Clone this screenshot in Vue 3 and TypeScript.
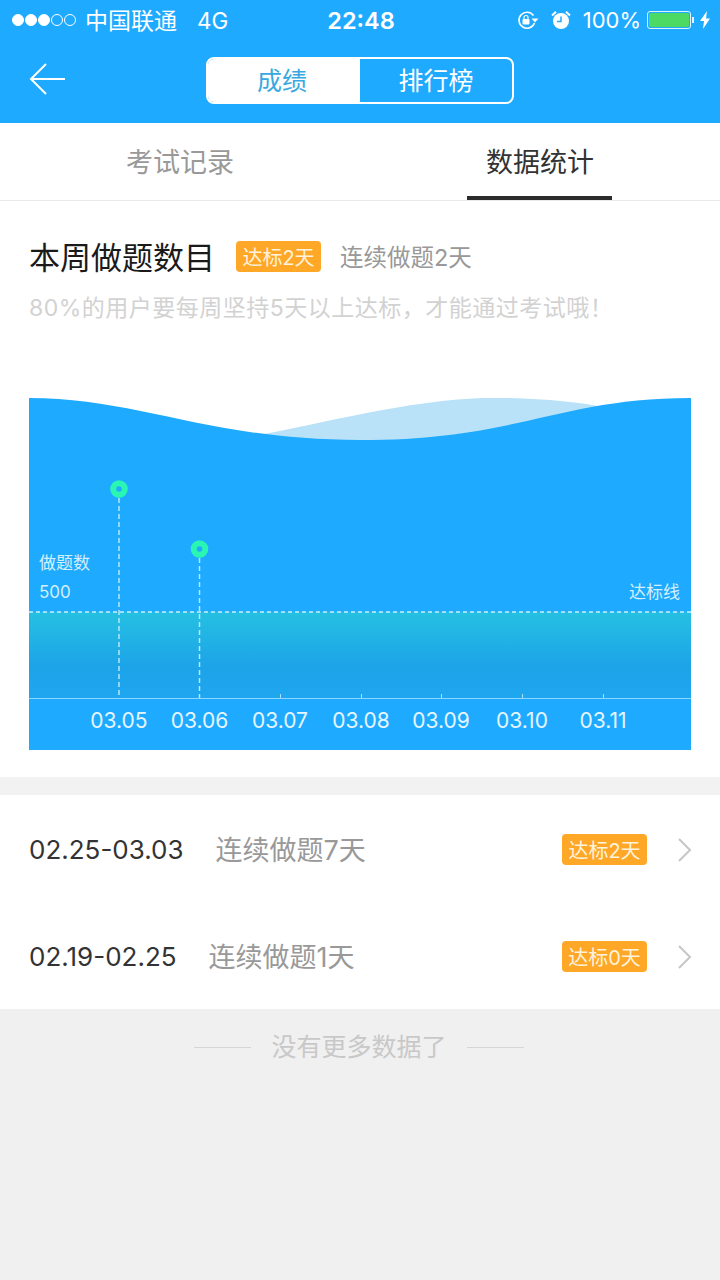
<script setup lang="ts">
const dates = ['03.05', '03.06', '03.07', '03.08', '03.09', '03.10', '03.11']
const xs = [90, 170.5, 251, 332, 412, 493, 574]
const points = [
  { x: 90, y: 91 },
  { x: 170.5, y: 151 }
]
const history = [
  { range: '02.25-03.03', streak: '连续做题7天', days: '达标2天' },
  { range: '02.19-02.25', streak: '连续做题1天', days: '达标0天' }
]
</script>

<template>
  <div class="page">
    <header class="head">
      <div class="status">
        <div class="status-left">
          <span class="dots">
            <i class="dot on"></i><i class="dot on"></i><i class="dot on"></i><i class="dot"></i><i class="dot"></i>
          </span>
          <span class="carrier">中国联通</span>
          <span class="net">4G</span>
        </div>
        <div class="clock">22:48</div>
        <div class="status-right">
          <svg class="ico-lock" width="24" height="20" viewBox="0 0 24 20">
            <path d="M17.5 5.500A8 8 0 1 0 18.500 13" fill="none" stroke="#fff" stroke-width="1.600" />
            <path d="M15.500 8.500h7l-3.500 4z" fill="#fff" />
            <rect x="6.500" y="9" width="7" height="5.500" rx="1" fill="#fff" />
            <path d="M8 9V7.500a2 2 0 0 1 4 0V9" fill="none" stroke="#fff" stroke-width="1.200" />
          </svg>
          <svg class="ico-alarm" width="20" height="20" viewBox="0 0 20 20">
            <circle cx="10" cy="11" r="8" fill="#fff" />
            <path d="M10 6.500V11.500H6" fill="none" stroke="#1eaaff" stroke-width="1.500" />
            <path d="M1 5.500 5 1.800M19 5.500 15 1.800" stroke="#fff" stroke-width="2" />
          </svg>
          <span class="pct">100%</span>
          <span class="battery"><span class="battery-fill"></span></span>
          <span class="battery-cap"></span>
          <svg class="ico-bolt" width="12" height="18" viewBox="0 0 12 18">
            <path d="M8 0 1 10h4l-1 8 7-10.500H7z" fill="#fff" />
          </svg>
        </div>
      </div>
      <div class="nav">
        <svg class="back" width="38" height="32" viewBox="0 0 38 32">
          <path d="M36 16H2M17 1 2 16l15 15" fill="none" stroke="#fff" stroke-width="2" />
        </svg>
        <div class="switch">
          <div class="switch-item active">成绩</div>
          <div class="switch-item">排行榜</div>
        </div>
      </div>
    </header>

    <div class="tabs">
      <div class="tab">考试记录</div>
      <div class="tab current">数据统计</div>
    </div>

    <section class="week">
      <div class="week-title">
        <h2>本周做题数目</h2>
        <span class="badge">达标2天</span>
        <span class="streak-top">连续做题2天</span>
      </div>
      <p class="hint">80%的用户要每周坚持5天以上达标，才能通过考试哦！</p>

      <div class="chart">
        <svg width="662" height="352" viewBox="0 0 662 352">
          <defs>
            <linearGradient id="band" x1="0" y1="0" x2="0" y2="1">
              <stop offset="0" stop-color="#25c0e2" />
              <stop offset="0.65" stop-color="#1da3e8" />
              <stop offset="1" stop-color="#1ea6f0" />
            </linearGradient>
          </defs>
          <path d="M230 37C300 24 400 -3 480 0 520 1 550 4 580 10V60H230z" fill="#b9e2f8" />
          <path d="M0 0C110 0 180 42 331 42 490 42 530 0 662 0V352H0z" fill="#1eaaff" />
          <rect x="0" y="214" width="662" height="86" fill="url(#band)" />
          <line x1="0" y1="214" x2="662" y2="214" stroke="#c8effa" stroke-width="1.500" stroke-dasharray="4 3" />
          <line x1="0" y1="300.500" x2="662" y2="300.500" stroke="#8fd6fb" stroke-width="1" />
          <line v-for="x in xs.slice(2)" :key="x" :x1="x + 0.5" y1="296" :x2="x + 0.5" y2="300" stroke="#a9dffb" />
          <g v-for="p in points" :key="p.x">
            <line :x1="p.x" :y1="p.y + 9" :x2="p.x" y2="300" stroke="#b5e6fb" stroke-width="1.500" stroke-dasharray="5 3" />
            <circle :cx="p.x" :cy="p.y" r="5.800" fill="#1eaaff" stroke="#2af5b2" stroke-width="6" />
          </g>
        </svg>
        <span class="axis-name">做题数</span>
        <span class="axis-val">500</span>
        <span class="goal">达标线</span>
        <span v-for="(d, i) in dates" :key="d" class="date" :style="{ left: xs[i] + 'px' }">{{ d }}</span>
      </div>
    </section>

    <div class="gap"></div>

    <section class="list">
      <div v-for="row in history" :key="row.range" class="row">
        <span class="range">{{ row.range }}</span>
        <span class="streak">{{ row.streak }}</span>
        <span class="badge row-badge">{{ row.days }}</span>
        <svg class="chev" width="16" height="26" viewBox="0 0 16 26">
          <path d="M2 2l11 11L2 24" fill="none" stroke="#c6c6c6" stroke-width="2" />
        </svg>
      </div>
    </section>

    <footer class="end">
      <i class="rule"></i>
      <span>没有更多数据了</span>
      <i class="rule"></i>
    </footer>
  </div>
</template>

<style>
html,
body {
  margin: 0;
  background: #f0f0f0;
}
</style>

<style scoped>
.page {
  width: 720px;
  height: 1280px;
  overflow: hidden;
  display: flex;
  flex-direction: column;
  background: #f0f0f0;
  font-family: "Inter", "Noto Sans CJK SC", sans-serif;
}

.head {
  height: 123px;
  background: #1eaaff;
  color: #fff;
}

.status {
  height: 40px;
  display: grid;
  grid-template-columns: 1fr auto 1fr;
  align-items: center;
}

.status-left {
  display: flex;
  align-items: center;
  padding-left: 12px;
  font-size: 23px;
}

.dots {
  display: flex;
  gap: 1px;
  margin-right: 9px;
}

.dot {
  width: 12px;
  height: 12px;
  box-sizing: border-box;
  border: 1px solid #fff;
  border-radius: 50%;
}

.dot.on {
  background: #fff;
}

.carrier {
  margin-top: -3px;
}

.net {
  margin-left: 20px;
  font-size: 22.500px;
}

.clock {
  padding-left: 2px;
  font-size: 23.500px;
  font-weight: 600;
}

.status-right {
  display: flex;
  align-items: center;
  justify-content: flex-end;
  padding-right: 9px;
}

.ico-alarm {
  margin-left: 11px;
}

.pct {
  margin-left: 12px;
  font-size: 22px;
}

.battery {
  margin-left: 6px;
  width: 44px;
  height: 18px;
  box-sizing: border-box;
  padding: 1px;
  border: 1px solid #dff3ff;
  border-radius: 3px;
}

.battery-fill {
  display: block;
  height: 100%;
  border-radius: 2px;
  background: #4cd964;
}

.battery-cap {
  width: 2px;
  height: 6px;
  margin-left: 1px;
  background: #dff3ff;
}

.ico-bolt {
  margin-left: 5px;
}

.nav {
  position: relative;
  height: 83px;
  display: flex;
  align-items: center;
  justify-content: center;
}

.back {
  position: absolute;
  left: 29px;
  top: 23px;
}

.switch {
  display: flex;
  width: 308px;
  height: 47px;
  margin-bottom: 2px;
  box-sizing: border-box;
  border: 2px solid #fff;
  border-radius: 8px;
  overflow: hidden;
}

.switch-item {
  flex: 1;
  display: flex;
  align-items: center;
  justify-content: center;
  padding-bottom: 3px;
  font-size: 25px;
  color: #fff;
}

.switch-item.active {
  flex: none;
  width: 152px;
  box-sizing: border-box;
  padding-right: 4px;
  background: #fff;
  color: #3aa8e0;
}

.tabs {
  height: 77px;
  display: flex;
  background: #fff;
  border-bottom: 1px solid #e8e8e8;
}

.tab {
  flex: 1;
  display: flex;
  align-items: center;
  justify-content: center;
  padding-bottom: 3px;
  font-size: 27px;
  color: #999;
}

.tab.current {
  position: relative;
  color: #333;
}

.tab.current::after {
  content: "";
  position: absolute;
  left: 107px;
  bottom: 0;
  width: 145px;
  height: 4px;
  background: #2b2b2b;
}

.week {
  height: 576px;
  box-sizing: border-box;
  padding: 34px 29px 0;
  background: #fff;
}

.week-title {
  display: flex;
  align-items: center;
  height: 40px;
}

.week-title h2 {
  margin: 0;
  font-size: 31px;
  font-weight: 400;
  color: #1a1a1a;
}

.badge {
  display: flex;
  align-items: center;
  justify-content: center;
  width: 85px;
  height: 31px;
  border-radius: 4px;
  background: #ffa726;
  color: #fff3dc;
  font-size: 20px;
}

.week-title .badge {
  margin-top: 2px;
  margin-left: 21px;
}

.streak-top {
  margin-top: 2px;
  margin-left: 19px;
  font-size: 23.500px;
  color: #999;
}

.hint {
  margin: 17px 0 0;
  height: 32px;
  line-height: 32px;
  font-size: 23px;
  letter-spacing: 0.500px;
  color: #d2d2d2;
}

.chart {
  position: relative;
  width: 662px;
  height: 352px;
  margin-top: 74px;
}

.chart svg {
  display: block;
}

.axis-name,
.axis-val,
.goal {
  position: absolute;
  font-size: 17px;
  line-height: 20px;
  color: #d4effd;
}

.axis-name {
  left: 10px;
  top: 155px;
}

.axis-val {
  left: 10px;
  top: 184px;
}

.goal {
  right: 11px;
  top: 184px;
}

.date {
  position: absolute;
  top: 311px;
  transform: translateX(-50%);
  font-size: 21px;
  line-height: 24px;
  color: #e6f6ff;
}

.gap {
  height: 18px;
  background: #f2f2f2;
}

.list {
  height: 214px;
  background: #fff;
}

.row {
  height: 107px;
  display: flex;
  align-items: center;
  padding: 0 27px 0 29px;
}

.row:first-child {
  height: 109px;
}

.row:last-child {
  height: 105px;
}

.range {
  font-size: 26px;
  color: #333;
}

.streak {
  margin-left: 32px;
  margin-top: -3px;
  font-size: 27px;
  color: #999;
}

.row-badge {
  margin-left: auto;
}

.chev {
  margin-left: 30px;
}

.end {
  flex: 1;
  display: flex;
  align-items: flex-start;
  justify-content: center;
  padding: 20px 2px 0 0;
  font-size: 25px;
  line-height: 36px;
  color: #c8c8c8;
}

.rule {
  width: 57px;
  height: 1px;
  margin: 18px 20px 0;
  background: #d6d6d6;
}
</style>
